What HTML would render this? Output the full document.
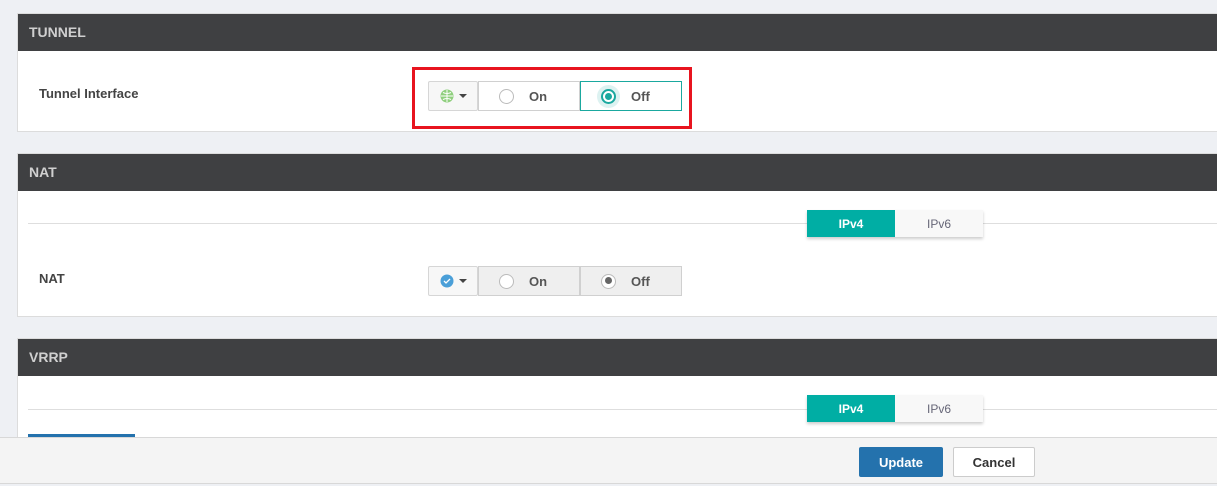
<!DOCTYPE html>
<html style="width:1217px;height:486px;overflow:hidden"><head><style>
*{box-sizing:border-box;margin:0;padding:0}
body{width:1217px;height:486px;overflow:hidden;background:#eef0f4;font-family:"Liberation Sans",sans-serif;position:relative}
.card{position:absolute;left:17px;width:1210px;background:#fff;border:1px solid #dcdcdc;overflow:hidden}
.hd{height:37px;background:#3f4042;color:#d0d0d0;font-weight:bold;font-size:14px;line-height:37px;padding-left:11px}
.lbl{position:absolute;font-size:13px;font-weight:bold;color:#444}
.grp{position:absolute;display:flex;height:30px}
.dd{width:50px;border:1px solid #d6d6d6;background:#f7f7f7;display:flex;align-items:center;justify-content:center;gap:5px;border-radius:2px}
.caret{width:0;height:0;border-left:4px solid transparent;border-right:4px solid transparent;border-top:4px solid #444}
.opt{width:102px;border:1px solid #d0d0d0;display:flex;align-items:center;padding-left:20px;font-size:13px;font-weight:bold;color:#555;gap:15px}
.r{width:15px;height:15px;border-radius:50%;border:1.5px solid #bbb;background:#fff;position:relative}
.hr{position:absolute;left:10px;right:0;height:1px;background:#dedede}
.tog{position:absolute;display:flex;height:27px;box-shadow:0 2px 3px rgba(0,0,0,.2);font-size:12px}
.tog div{width:88px;display:flex;align-items:center;justify-content:center}
.tog .a{background:#00aea4;color:#fff;font-weight:bold}
.tog .b{width:88px;background:#f8f8f8;color:#667}
</style></head><body>
<div class="card" style="top:13px;height:119px">
 <div class="hd">TUNNEL</div>
 <div class="lbl" style="left:21px;top:72px">Tunnel Interface</div>
</div>
<div style="position:absolute;left:412px;top:67px;width:280px;height:62px;border:3px solid #e8141f"></div>
<div class="grp" style="left:428px;top:81px">
 <div class="dd"><svg width="14" height="14" viewBox="0 0 14 14"><circle cx="7" cy="7" r="6.5" fill="#8fcf7e"/><path d="M1 7h12M7 1v12M3 3.5q4 2 8 0M3 10.5q4-2 8 0" stroke="#fff" stroke-width="1" fill="none"/></svg><span class="caret"></span></div>
 <div class="opt" style="background:#fff"><span class="r"></span>On</div>
 <div class="opt" style="border-color:#1aa89f;background:#fff"><span class="r" style="border:2px solid #1aa89f;box-shadow:0 0 0 4px rgba(26,168,159,.15)"><span style="position:absolute;left:2px;top:2px;width:7px;height:7px;border-radius:50%;background:#1aa89f"></span></span>Off</div>
</div>
<div class="card" style="top:153px;height:164px">
 <div class="hd">NAT</div>
 <div class="hr" style="top:69px"></div>
 <div class="lbl" style="left:21px;top:117px">NAT</div>
</div>
<div class="tog" style="left:807px;top:210px"><div class="a">IPv4</div><div class="b">IPv6</div></div>
<div class="grp" style="left:428px;top:266px">
 <div class="dd"><svg width="14" height="14" viewBox="0 0 14 14"><circle cx="7" cy="7" r="6.5" fill="#4a9fd8"/><path d="M4 7l2 2 4-4" stroke="#fff" stroke-width="1.3" fill="none"/></svg><span class="caret"></span></div>
 <div class="opt" style="background:#efefef"><span class="r"></span>On</div>
 <div class="opt" style="background:#efefef"><span class="r"><span style="position:absolute;left:2.5px;top:2.5px;width:7px;height:7px;border-radius:50%;background:#666"></span></span>Off</div>
</div>
<div class="card" style="top:338px;height:148px">
 <div class="hd">VRRP</div>
 <div class="hr" style="top:70px"></div>
 <div style="position:absolute;left:10px;top:95px;width:107px;height:10px;background:#2472ad"></div>
</div>
<div class="tog" style="left:807px;top:395px"><div class="a">IPv4</div><div class="b">IPv6</div></div>
<div style="position:absolute;left:0;top:437px;width:1217px;height:47px;background:#f4f4f4;border-top:1px solid #d8d8d8;border-bottom:1px solid #d8d8d8">
 <div style="position:absolute;left:859px;top:9px;width:84px;height:30px;background:#2472ad;color:#fff;font-weight:bold;font-size:13px;display:flex;align-items:center;justify-content:center;border-radius:2px">Update</div>
 <div style="position:absolute;left:953px;top:9px;width:82px;height:30px;background:#fff;border:1px solid #ccc;color:#333;font-weight:bold;font-size:13px;display:flex;align-items:center;justify-content:center;border-radius:2px">Cancel</div>
</div>
<div style="position:absolute;left:0;top:484px;width:1217px;height:2px;background:#eef0f4"></div>
</body></html>
